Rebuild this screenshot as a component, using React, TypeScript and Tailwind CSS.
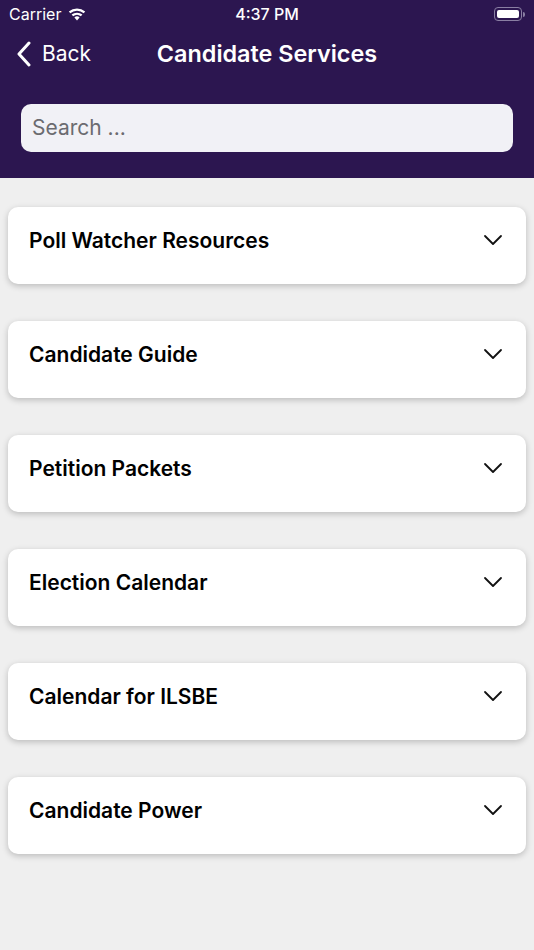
import React from 'react';

const items = [
  'Poll Watcher Resources',
  'Candidate Guide',
  'Petition Packets',
  'Election Calendar',
  'Calendar for ILSBE',
  'Candidate Power',
];

const Chevron = ({ className }: { className?: string }) => (
  <svg className={className} width="20" height="12" viewBox="0 0 20 12" fill="none" stroke="currentColor" strokeWidth="1.8" strokeLinecap="round" strokeLinejoin="round">
    <path d="M2 2l8 8 8-8" />
  </svg>
);

const App = () => {
  return (
    <div className="w-[534px] h-[950px] bg-[#efefef] overflow-hidden" style={{ fontFamily: 'Inter, "Liberation Sans", sans-serif' }}>
      {/* header */}
      <div className="bg-[#2c1650] text-white h-[178px] flex flex-col">
        <div className="h-[28px] flex items-center justify-between px-[9px] relative">
          <div className="flex items-center gap-[6px] text-[16px]">
            <span>Carrier</span>
            <svg width="20" height="14" viewBox="0 0 20 14" fill="white">
              <path d="M10 13.5l2.6-3.1a4 4 0 0 0-5.2 0z" />
              <path d="M4.6 7.6l1.5 1.7a6 6 0 0 1 7.8 0l1.5-1.7a8.4 8.4 0 0 0-10.8 0z" />
              <path d="M1.8 4.5l1.5 1.7a10.2 10.2 0 0 1 13.4 0l1.5-1.7a12.6 12.6 0 0 0-16.4 0z" />
            </svg>
          </div>
          <span className="absolute left-0 right-0 text-center text-[16px] font-medium">4:37 PM</span>
          <div className="flex items-center gap-[1px]">
            <div className="w-[28px] h-[14px] rounded-[4px] border border-[#8a7fa3] p-[2px]">
              <div className="w-full h-full bg-white rounded-[2px]" />
            </div>
            <div className="w-[2px] h-[5px] bg-[#8a7fa3] rounded-r" />
          </div>
        </div>
        <div className="h-[52px] flex items-center relative px-[16px]">
          <div className="flex items-center gap-[10px]">
            <svg width="16" height="26" viewBox="0 0 16 26" fill="none" stroke="white" strokeWidth="3" strokeLinecap="round" strokeLinejoin="round">
              <path d="M13 2L3 13l10 11" />
            </svg>
            <span className="text-[21px]">Back</span>
          </div>
          <span className="absolute left-0 right-0 text-center text-[23.4px] font-semibold pointer-events-none">Candidate Services</span>
        </div>
        <div className="px-[21px] pt-[24px]">
          <div className="h-[48px] rounded-[10px] bg-[#f1f1f6] flex items-center px-[11px] text-[21px] text-[#6b6b70]">
            Search ...
          </div>
        </div>
      </div>

      {/* list */}
      <div className="flex flex-col gap-[37px] px-[8px] pt-[29px]">
        {items.map((t) => (
          <div key={t} className="h-[77px] bg-white rounded-[10px] shadow-[0_2px_6px_rgba(0,0,0,0.22)] flex items-start justify-between pl-[21px] pr-[23px] pt-[21px]">
            <span className="text-[21px] font-semibold text-black leading-[26px]">{t}</span>
            <Chevron className="text-[#111] mt-[6px]" />
          </div>
        ))}
      </div>
    </div>
  );
};

export default App;
